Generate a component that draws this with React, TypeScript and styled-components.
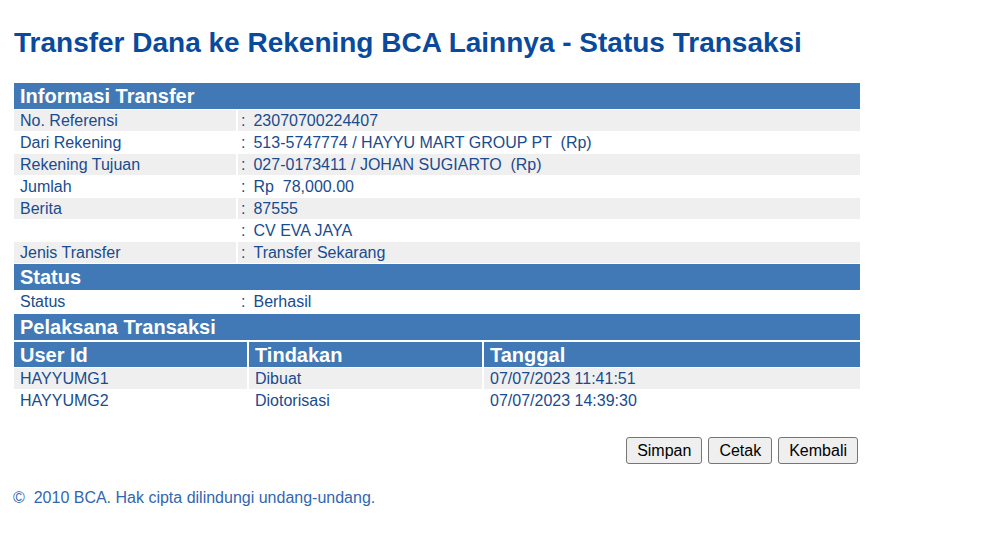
import React from "react";
import styled, { createGlobalStyle } from "styled-components";

const Global = createGlobalStyle`
  html, body { margin: 0; padding: 0; background: #ffffff; }
  body { font-family: "Liberation Sans", Arial, sans-serif; }
`;

const Page = styled.div`
  padding: 26px 0 0 14px;
  width: 846px;
  font-family: "Liberation Sans", Arial, sans-serif;
`;

const Title = styled.h1`
  margin: 0 0 23px 0;
  font-size: 28px;
  line-height: 34px;
  font-weight: bold;
  color: #0a4a9c;
`;

const Section = styled.div<{ $gap?: number }>`
  display: grid;
  grid-template-columns: 222px 1fr;
  column-gap: 2px;
  row-gap: 1px;
  margin-bottom: ${(p) => p.$gap ?? 1}px;
`;

const SectionHead = styled.div`
  grid-column: 1 / -1;
  background: #4079b5;
  color: #ffffff;
  font-size: 20px;
  font-weight: bold;
  height: 26px;
  line-height: 26px;
  padding-left: 6px;
`;

const Cell = styled.div<{ $alt?: boolean }>`
  background: ${(p) => (p.$alt ? "#efefef" : "#ffffff")};
  color: #1a4b8e;
  font-size: 16px;
  height: 21px;
  line-height: 21px;
  padding-left: 6px;
  white-space: pre;
`;

const ValueCell = styled(Cell)`
  padding-left: 3px;
`;

const Colon = styled.span`
  margin-right: 8px;
`;

const Grid3 = styled.div`
  display: grid;
  grid-template-columns: 233px 233px 1fr;
  column-gap: 2px;
  row-gap: 1px;
`;

const ColHead = styled.div`
  background: #4079b5;
  color: #ffffff;
  font-size: 20px;
  font-weight: bold;
  height: 25px;
  line-height: 26px;
  padding-left: 6px;
`;

const Buttons = styled.div`
  display: flex;
  justify-content: flex-end;
  gap: 6px;
  margin: 26px 2px 0 0;
`;

const Button = styled.button`
  font-family: "Liberation Sans", Arial, sans-serif;
  font-size: 16px;
  height: 27px;
  padding: 0 10px;
  background: #efefef;
  color: #000000;
  border: 1px solid #767676;
  border-radius: 3px;
`;

const Footer = styled.div`
  margin-top: 25px;
  margin-left: -1px;
  color: #3366b0;
  font-size: 16px;
  white-space: pre;
`;

const info: [string, string][] = [
  ["No. Referensi", "23070700224407"],
  ["Dari Rekening", "513-5747774 / HAYYU MART GROUP PT  (Rp)"],
  ["Rekening Tujuan", "027-0173411 / JOHAN SUGIARTO  (Rp)"],
  ["Jumlah", "Rp  78,000.00"],
  ["Berita", "87555"],
  ["", "CV EVA JAYA"],
  ["Jenis Transfer", "Transfer Sekarang"],
];

const actors: [string, string, string][] = [
  ["HAYYUMG1", "Dibuat", "07/07/2023 11:41:51"],
  ["HAYYUMG2", "Diotorisasi", "07/07/2023 14:39:30"],
];

function Row({ label, value, alt }: { label: string; value: string; alt: boolean }) {
  return (
    <>
      <Cell $alt={alt}>{label}</Cell>
      <ValueCell $alt={alt}>
        <Colon>:</Colon>
        {value}
      </ValueCell>
    </>
  );
}

export default function App() {
  return (
    <>
      <Global />
      <Page>
        <Title>Transfer Dana ke Rekening BCA Lainnya - Status Transaksi</Title>
        <Section>
          <SectionHead>Informasi Transfer</SectionHead>
          {info.map(([l, v], i) => (
            <Row key={i} label={l} value={v} alt={i % 2 === 0} />
          ))}
        </Section>
        <Section $gap={2}>
          <SectionHead>Status</SectionHead>
          <Row label="Status" value="Berhasil" alt={false} />
        </Section>
        <Section $gap={2}>
          <SectionHead>Pelaksana Transaksi</SectionHead>
        </Section>
        <Grid3>
          <ColHead>User Id</ColHead>
          <ColHead>Tindakan</ColHead>
          <ColHead>Tanggal</ColHead>
          {actors.map((r, i) =>
            r.map((c, j) => (
              <Cell key={`${i}-${j}`} $alt={i % 2 === 0}>
                {c}
              </Cell>
            ))
          )}
        </Grid3>
        <Buttons>
          <Button>Simpan</Button>
          <Button>Cetak</Button>
          <Button>Kembali</Button>
        </Buttons>
        <Footer>©  2010 BCA. Hak cipta dilindungi undang-undang.</Footer>
      </Page>
    </>
  );
}
